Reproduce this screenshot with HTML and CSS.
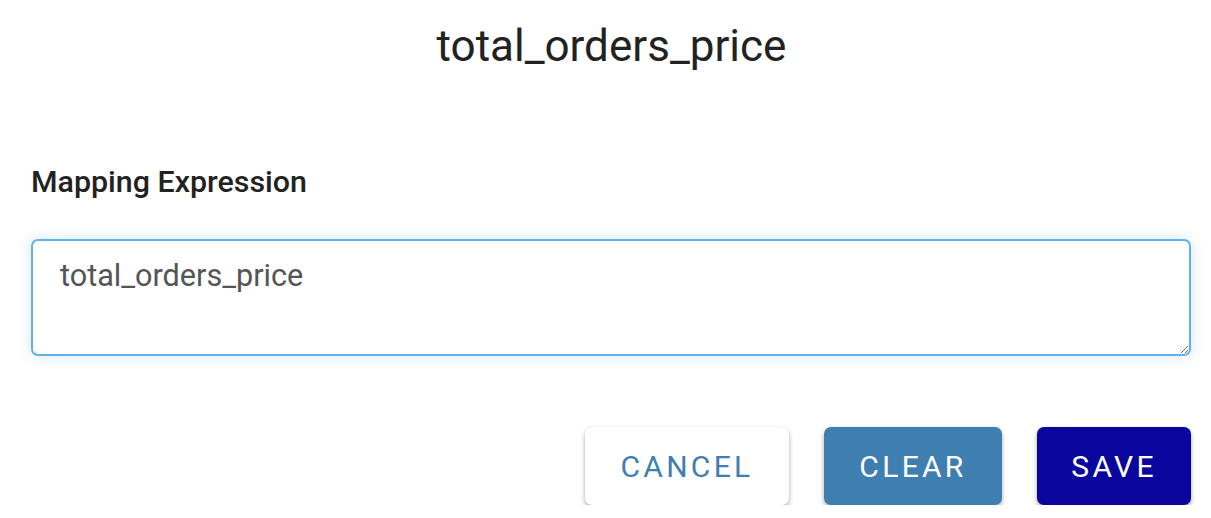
FILE: index.html
```html
<!DOCTYPE html>
<html lang="en">
<head>
  <meta charset="UTF-8">
  <title>Mapping Expression</title>
  <link rel="stylesheet" href="styles.css">
</head>
<body>
  <div class="dialog">
    <h2 class="dialog-title">total_orders_price</h2>

    <label class="field-label" for="expression">Mapping Expression</label>
    <div class="textarea-wrap">
      <textarea id="expression" class="expression-input">total_orders_price</textarea>
    </div>

    <div class="actions">
      <button class="btn btn-cancel">Cancel</button>
      <button class="btn btn-clear">Clear</button>
      <button class="btn btn-save">Save</button>
    </div>
  </div>
</body>
</html>
```

FILE: styles.css
```css
:root {
  --text: #222;
  --muted: #555;
  --focus: #64b0ee;
  --steel: #3f7eb1;
  --navy: #0a069d;
}

body {
  margin: 0;
  font-family: Roboto, 'Noto Sans', sans-serif;
  color: var(--text);
  background: #fff;
}

.dialog {
  padding: 18px 21px 0 31px;
}

.dialog-title {
  margin: 0;
  text-align: center;
  font-size: 44px;
  font-weight: 400;
  line-height: 56px;
  padding-left: 2px;
}

.field-label {
  display: block;
  margin-top: 90px;
  font-size: 30.4px;
  font-weight: 500;
  line-height: 36px;
}

.textarea-wrap {
  margin-top: 39px;
}

.expression-input {
  display: block;
  box-sizing: border-box;
  width: 1160px;
  height: 117px;
  padding: 17px 27px 13px;
  border: 2px solid var(--focus);
  border-radius: 7px;
  font-family: inherit;
  font-size: 30.6px;
  line-height: 36px;
  color: var(--muted);
  outline: none;
  box-shadow: 0 0 14px rgba(100, 176, 238, 0.3);
  resize: vertical;
}

.actions {
  display: flex;
  justify-content: flex-end;
  gap: 35px;
  margin-top: 71px;
  width: 1160px;
}

.btn {
  height: 78px;
  padding: 0;
  border: none;
  border-radius: 7px;
  font-family: inherit;
  font-size: 30px;
  font-weight: 400;
  letter-spacing: 3.3px;
  text-transform: uppercase;
  cursor: pointer;
  box-shadow: 0 3px 5px rgba(0, 0, 0, 0.3), 0 0 2px rgba(0, 0, 0, 0.08);
}

.btn-cancel {
  width: 204px;
  background: #fff;
  color: var(--steel);
}

.btn-clear {
  width: 178px;
  background: var(--steel);
  color: #fff;
}

.btn-save {
  width: 154px;
  background: var(--navy);
  color: #fff;
}
```
